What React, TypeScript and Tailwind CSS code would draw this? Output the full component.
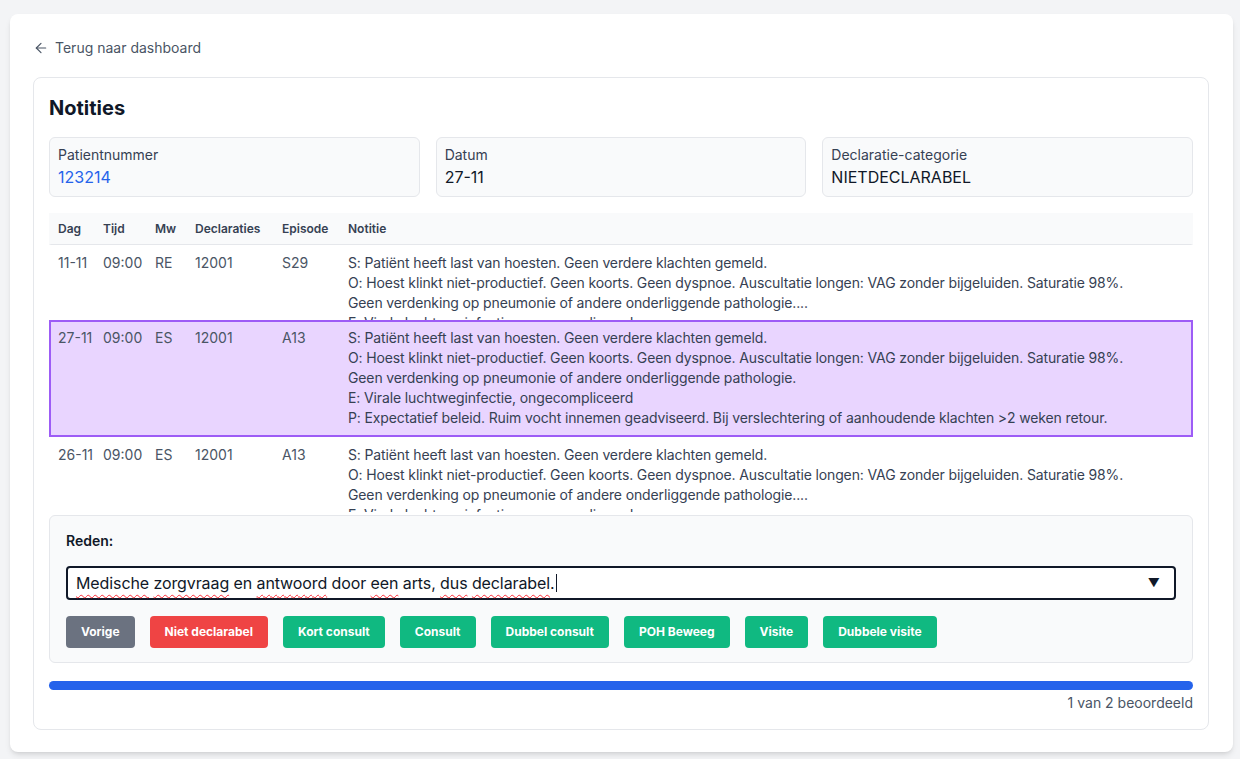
import { ArrowLeft } from 'lucide-react';

type Row = {
  dag: string;
  tijd: string;
  mw: string;
  decl: string;
  episode: string;
  lines: string[];
  selected?: boolean;
};

const shortNote = [
  'S: Patiënt heeft last van hoesten. Geen verdere klachten gemeld.',
  'O: Hoest klinkt niet-productief. Geen koorts. Geen dyspnoe. Auscultatie longen: VAG zonder bijgeluiden. Saturatie 98%.',
  'Geen verdenking op pneumonie of andere onderliggende pathologie....',
  'E: Virale luchtweginfectie, ongecompliceerd',
];

const fullNote = [
  'S: Patiënt heeft last van hoesten. Geen verdere klachten gemeld.',
  'O: Hoest klinkt niet-productief. Geen koorts. Geen dyspnoe. Auscultatie longen: VAG zonder bijgeluiden. Saturatie 98%.',
  'Geen verdenking op pneumonie of andere onderliggende pathologie.',
  'E: Virale luchtweginfectie, ongecompliceerd',
  'P: Expectatief beleid. Ruim vocht innemen geadviseerd. Bij verslechtering of aanhoudende klachten >2 weken retour.',
];

const rows: Row[] = [
  { dag: '11-11', tijd: '09:00', mw: 'RE', decl: '12001', episode: 'S29', lines: shortNote },
  { dag: '27-11', tijd: '09:00', mw: 'ES', decl: '12001', episode: 'A13', lines: fullNote, selected: true },
  { dag: '26-11', tijd: '09:00', mw: 'ES', decl: '12001', episode: 'A13', lines: shortNote },
];

const cols = 'grid grid-cols-[45px_52px_40px_87px_66px_1fr]';

const buttons = [
  { label: 'Vorige', cls: 'bg-[#6b7280]' },
  { label: 'Niet declarabel', cls: 'bg-[#ef4444]' },
  { label: 'Kort consult', cls: 'bg-[#10b981]' },
  { label: 'Consult', cls: 'bg-[#10b981]' },
  { label: 'Dubbel consult', cls: 'bg-[#10b981]' },
  { label: 'POH Beweeg', cls: 'bg-[#10b981]' },
  { label: 'Visite', cls: 'bg-[#10b981]' },
  { label: 'Dubbele visite', cls: 'bg-[#10b981]' },
];

function InfoBox({ label, value, blue }: { label: string; value: string; blue?: boolean }) {
  return (
    <div className="h-[60px] rounded-md border border-gray-200 bg-gray-50 px-2 pt-[7px]">
      <div className="text-sm leading-5 text-gray-700">{label}</div>
      <div className={`text-base leading-6 ${blue ? 'text-[#2563eb]' : 'text-gray-900'}`}>{value}</div>
    </div>
  );
}

function Cells({ row }: { row: Row }) {
  const cell = 'whitespace-nowrap pl-[7px] pr-1 text-sm leading-5';
  return (
    <>
      <div className={`${cell} text-gray-600`}>{row.dag}</div>
      <div className={`${cell} text-gray-600`}>{row.tijd}</div>
      <div className={`${cell} text-gray-600`}>{row.mw}</div>
      <div className={`${cell} text-gray-600`}>{row.decl}</div>
      <div className={`${cell} text-gray-600`}>{row.episode}</div>
      <div className={`${cell} tracking-[-0.13px] text-gray-700`}>
        {row.lines.map((l) => (
          <div key={l}>{l}</div>
        ))}
      </div>
    </>
  );
}

function NoteRow({ row }: { row: Row }) {
  if (row.selected) {
    return (
      <div className={`${cols} border-2 border-[#9d5cf6] bg-[#e9d5ff] pt-1.5 pb-[7px]`}>
        <Cells row={row} />
      </div>
    );
  }
  return (
    <div className={`${cols} h-[75px] overflow-hidden border-x-2 border-transparent pt-2`}>
      <Cells row={row} />
    </div>
  );
}

const wavy = 'underline decoration-wavy decoration-red-500 decoration-1 underline-offset-[5px]';

export default function App() {
  return (
    <div className="min-h-screen bg-gray-100 pl-[10px] pt-[14px] pr-[7px] pb-[7px] font-['Inter','Noto_Sans',sans-serif]">
      <div className="rounded-lg bg-white pl-[23px] pr-6 pt-6 pb-[22px] shadow-md">
        <a className="flex h-5 items-center gap-1.5 text-sm text-gray-600">
          <ArrowLeft size={16} strokeWidth={1.75} />
          <span>Terug naar dashboard</span>
        </a>

        <div className="mt-[19px] rounded-lg border border-gray-200 bg-white px-[15px] pt-4 pb-4">
          <h1 className="text-xl leading-7 font-bold text-gray-900">Notities</h1>

          <div className="mt-[15px] grid grid-cols-3 gap-4">
            <InfoBox label="Patientnummer" value="123214" blue />
            <InfoBox label="Datum" value="27-11" />
            <InfoBox label="Declaratie-categorie" value="NIETDECLARABEL" />
          </div>

          <div className="mt-4 h-[302px] overflow-hidden">
            <div className={`${cols} h-8 items-center border-b border-gray-200 bg-gray-50 border-x-2 border-x-transparent`}>
              {['Dag', 'Tijd', 'Mw', 'Declaraties', 'Episode', 'Notitie'].map((h) => (
                <div key={h} className="whitespace-nowrap pl-[7px] text-xs font-semibold text-gray-700">{h}</div>
              ))}
            </div>
            {rows.map((r, i) => (
              <NoteRow key={i} row={r} />
            ))}
          </div>

          <div className="rounded-md border border-gray-200 bg-gray-50 px-4 pt-[15px] pb-[14px]">
            <div className="text-sm leading-5 font-semibold text-gray-900">Reden:</div>
            <div className="mt-[15px] flex h-[34px] items-center justify-between rounded border-2 border-gray-900 bg-white pl-2 pr-[14px]">
              <div className="text-base tracking-[-0.1px] text-gray-900">
                <span className={wavy}>Medische</span> <span className={wavy}>zorgvraag</span> en{' '}
                <span className={wavy}>antwoord</span> door <span className={wavy}>een</span> arts,{' '}
                <span className={wavy}>dus</span> <span className={wavy}>declarabel</span>.
                <span className="ml-px inline-block h-[18px] w-px translate-y-[3px] bg-gray-900" />
              </div>
              <span className="text-xs text-gray-900">▼</span>
            </div>
            <div className="mt-4 flex gap-[15px]">
              {buttons.map((b) => (
                <button
                  key={b.label}
                  className={`h-8 rounded px-[15px] text-xs font-bold text-white ${b.cls}`}
                >
                  {b.label}
                </button>
              ))}
            </div>
          </div>

          <div className="mt-[18px] h-[9px] rounded-full bg-[#2563eb]" />
          <div className="mt-[3px] text-right text-sm leading-5 text-gray-600">1 van 2 beoordeeld</div>
        </div>
      </div>
    </div>
  );
}
